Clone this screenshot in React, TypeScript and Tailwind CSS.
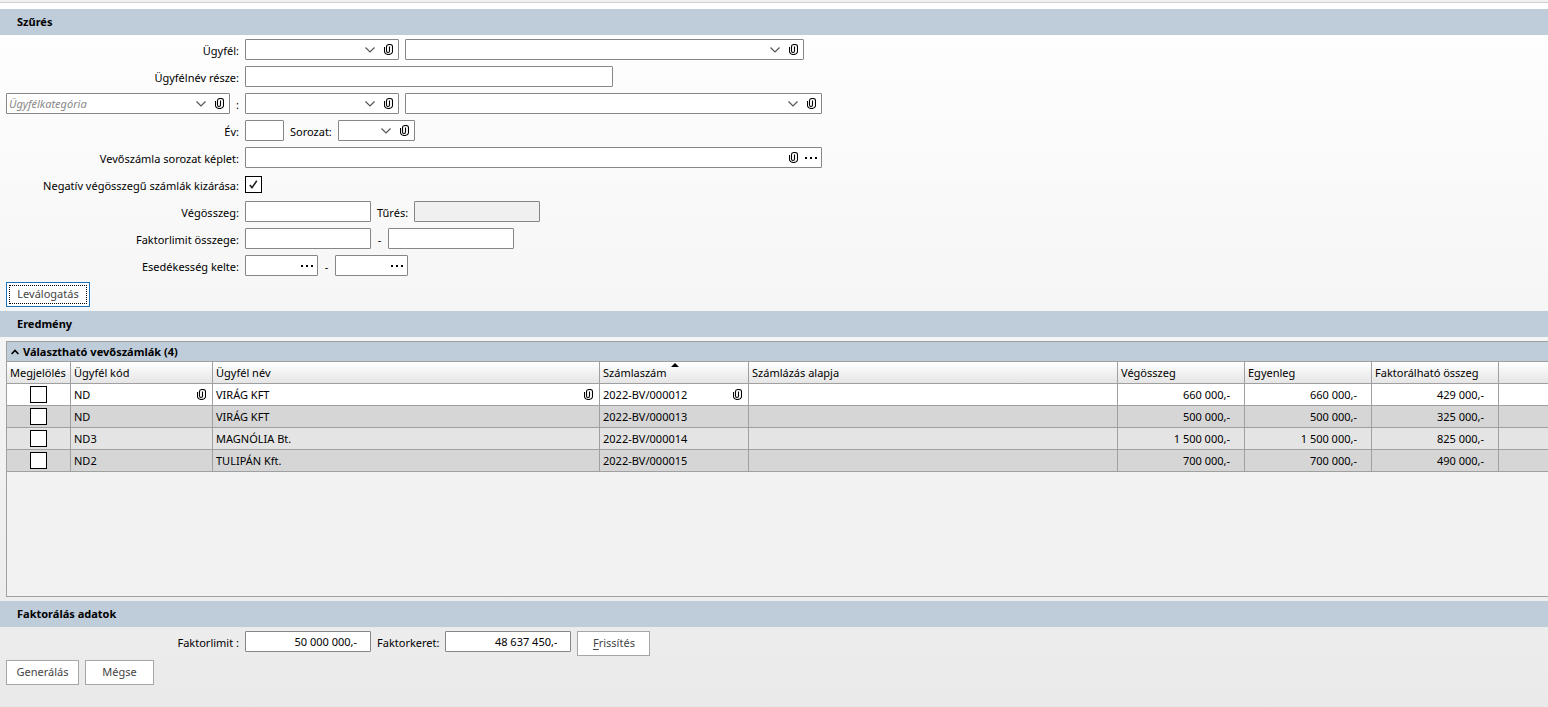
import type { ReactNode } from "react";
import clsx from "clsx";

const COLUMNS = [
  { title: "Megjelölés", width: "w-16" },
  { title: "Ügyfél kód", width: "w-[142px]" },
  { title: "Ügyfél név", width: "w-[387px]" },
  { title: "Számlaszám", width: "w-[149px]", sorted: true },
  { title: "Számlázás alapja", width: "w-[369px]" },
  { title: "Végösszeg", width: "w-[127px]" },
  { title: "Egyenleg", width: "w-[127px]" },
  { title: "Faktorálható összeg", width: "w-[127px]" },
];

const INVOICES = [
  { code: "ND", name: "VIRÁG KFT", number: "2022-BV/000012", total: "660 000,-", balance: "660 000,-", factorable: "429 000,-" },
  { code: "ND", name: "VIRÁG KFT", number: "2022-BV/000013", total: "500 000,-", balance: "500 000,-", factorable: "325 000,-" },
  { code: "ND3", name: "MAGNÓLIA Bt.", number: "2022-BV/000014", total: "1 500 000,-", balance: "1 500 000,-", factorable: "825 000,-" },
  { code: "ND2", name: "TULIPÁN Kft.", number: "2022-BV/000015", total: "700 000,-", balance: "700 000,-", factorable: "490 000,-" },
];

const FIELD = "h-[21px] rounded-[1px] border border-[#868686] bg-white";
const BUTTON = "h-[25px] border border-[#a6a6a6] bg-white pb-0.5 text-[#444]";
const CELL = "h-[22px] border-r border-b border-[#a0a0a0] p-0";

const ClipIcon = () => (
  <svg width="9" height="11" viewBox="0 0 9 11" fill="none" stroke="#000" strokeWidth="1.1" className="shrink-0">
    <path d="M.5 3v5Q1 10.5 4.5 10.5T8.5 8V2.5Q8.5.5 5.5.5T2.5 2.5V7Q2.5 8.5 4 8.5T5.5 7V2.5" />
  </svg>
);

const ChevronIcon = () => (
  <svg width="10" height="6" viewBox="0 0 10 6" fill="none" stroke="#555" strokeWidth="1.2" className="shrink-0">
    <path d="M.5.5 5 5 9.5.5" />
  </svg>
);

const DotsIcon = () => (
  <svg width="12" height="2" viewBox="0 0 12 2" className="shrink-0">
    <path d="M0 0h2v2H0zM5 0h2v2H5zM10 0h2v2h-2z" />
  </svg>
);

const CheckIcon = () => (
  <svg
    width="9"
    height="9"
    viewBox="0 0 9 9"
    fill="none"
    stroke="#222"
    strokeWidth="1.6"
    className="pointer-events-none absolute top-1 left-1 hidden peer-checked:block"
  >
    <path d="M.8 5 3 7.6 7.8.8" />
  </svg>
);

type ComboProps = { id: string; width: string; label?: string; placeholder?: string };

const Combo = ({ id, width, label, placeholder }: ComboProps) => (
  <div className={clsx(FIELD, width, "flex items-center pr-[5px]")}>
    <select
      id={id}
      aria-label={label}
      defaultValue=""
      className="h-full min-w-0 flex-1 appearance-none bg-transparent pl-0.5 text-[#888] italic outline-none"
    >
      <option value="">{placeholder}</option>
    </select>
    <ChevronIcon />
    <button type="button" aria-label="Csatolás" className="ml-[9px]">
      <ClipIcon />
    </button>
  </div>
);

const DateField = ({ id, label }: { id: string; label?: string }) => (
  <div className={clsx(FIELD, "flex w-[73px] items-center pr-1")}>
    <input id={id} aria-label={label} className="min-w-0 flex-1 bg-transparent outline-none" />
    <button type="button" aria-label="Naptár">
      <DotsIcon />
    </button>
  </div>
);

const Checkbox = ({ id, label, checked }: { id: string; label?: string; checked?: boolean }) => (
  <span className="relative block size-[17px]">
    <input
      id={id}
      type="checkbox"
      aria-label={label}
      defaultChecked={checked}
      className="peer block size-full appearance-none border border-black bg-white"
    />
    <CheckIcon />
  </span>
);

const Row = ({ label, htmlFor, children }: { label: string; htmlFor: string; children: ReactNode }) => (
  <div className="flex h-[21px] items-center gap-1.5">
    <label htmlFor={htmlFor} className="w-[233px] pt-0.5 text-right">
      {label}
    </label>
    {children}
  </div>
);

const SectionTitle = ({ children }: { children: ReactNode }) => (
  <h2 className="flex h-[26px] shrink-0 items-center bg-[#bfccda] px-[17px] font-bold">{children}</h2>
);

const FilterSection = () => (
  <section>
    <SectionTitle>Szűrés</SectionTitle>
    <form className="flex flex-col gap-1.5 px-1.5 py-1">
      <Row label="Ügyfél:" htmlFor="client">
        <Combo id="client" width="w-[154px]" />
        <Combo id="client-name" width="w-[399px]" label="Ügyfél neve" />
      </Row>
      <Row label="Ügyfélnév része:" htmlFor="name-part">
        <input id="name-part" className={clsx(FIELD, "w-[368px]")} />
      </Row>
      <div className="flex h-[21px] items-center gap-1.5">
        <div className="flex w-[233px] items-center justify-between">
          <Combo id="category" width="w-56" label="Ügyfélkategória" placeholder="Ügyfélkategória" />
          <span className="pt-0.5">:</span>
        </div>
        <Combo id="category-code" width="w-[154px]" label="Kategória kód" />
        <Combo id="category-name" width="w-[417px]" label="Kategória név" />
      </div>
      <Row label="Év:" htmlFor="year">
        <input id="year" className={clsx(FIELD, "w-[39px]")} />
        <label htmlFor="series" className="pt-0.5">
          Sorozat:
        </label>
        <Combo id="series" width="w-[77px]" />
      </Row>
      <Row label="Vevőszámla sorozat képlet:" htmlFor="formula">
        <div className={clsx(FIELD, "flex w-[577px] items-center pr-1")}>
          <input id="formula" className="min-w-0 flex-1 bg-transparent outline-none" />
          <button type="button" aria-label="Csatolás" className="mr-[7px]">
            <ClipIcon />
          </button>
          <button type="button" aria-label="Tallózás">
            <DotsIcon />
          </button>
        </div>
      </Row>
      <Row label="Negatív végösszegű számlák kizárása:" htmlFor="negative">
        <Checkbox id="negative" checked />
      </Row>
      <Row label="Végösszeg:" htmlFor="total">
        <input id="total" className={clsx(FIELD, "w-[126px]")} />
        <label htmlFor="tolerance" className="pt-0.5">
          Tűrés:
        </label>
        <input id="tolerance" disabled className="h-[21px] w-[126px] rounded-[1px] border border-[#868686] bg-[#f0f0f0]" />
      </Row>
      <Row label="Faktorlimit összege:" htmlFor="limit-from">
        <input id="limit-from" className={clsx(FIELD, "w-[126px]")} />
        <span className="w-[5px] pt-0.5 text-center">-</span>
        <input id="limit-to" aria-label="Faktorlimit felső határa" className={clsx(FIELD, "w-[126px]")} />
      </Row>
      <Row label="Esedékesség kelte:" htmlFor="due-from">
        <DateField id="due-from" />
        <span className="w-[5px] pt-0.5 text-center">-</span>
        <DateField id="due-to" label="Esedékesség vége" />
      </Row>
      <button type="button" className="flex h-[25px] w-[84px] border border-[#1873bb] bg-white p-0.5 text-[#444]">
        <span className="flex flex-1 items-center justify-center self-stretch border border-dotted border-black pb-0.5">
          Leválogatás
        </span>
      </button>
    </form>
  </section>
);

const InvoiceTable = () => (
  <table className="w-full table-fixed border-separate border-spacing-0">
    <thead>
      <tr className="bg-linear-to-b from-white to-[#e4e4e4]">
        {COLUMNS.map((col) => (
          <th key={col.title} className={clsx(CELL, col.width, "text-left font-normal whitespace-nowrap")}>
            <div className="flex h-[21px] items-center gap-1 pl-[3px]">
              {col.title}
              {col.sorted && (
                <svg width="8" height="5" viewBox="0 0 8 5" className="self-start">
                  <path d="M0 5 4 1l4 4z" />
                </svg>
              )}
            </div>
          </th>
        ))}
        <td className="border-b border-[#a0a0a0] p-0" />
      </tr>
    </thead>
    <tbody>
      {INVOICES.map((inv, i) => (
        <tr
          key={inv.number}
          className={clsx(i === 0 && "bg-white", i % 2 === 1 && "bg-[#d6d6d6]", i === 2 && "bg-[#e4e4e4]")}
        >
          <td className={CELL}>
            <div className="flex justify-center">
              <Checkbox id={`mark-${i}`} label={`Megjelölés ${inv.number}`} />
            </div>
          </td>
          {[inv.code, inv.name, inv.number].map((text, j) => (
            <td key={j} className={CELL}>
              <div className="flex items-center justify-between pr-1.5 pl-[3px]">
                {text}
                {i === 0 && (
                  <button type="button" aria-label="Csatolás">
                    <ClipIcon />
                  </button>
                )}
              </div>
            </td>
          ))}
          <td className={CELL} />
          {[inv.total, inv.balance, inv.factorable].map((amount, j) => (
            <td key={j} className={CELL}>
              <div className="pr-3.5 text-right">{amount}</div>
            </td>
          ))}
          <td className="border-b border-[#a0a0a0] p-0" />
        </tr>
      ))}
    </tbody>
  </table>
);

const ResultSection = () => (
  <section className="flex flex-1 flex-col">
    <SectionTitle>Eredmény</SectionTitle>
    <div className="my-1 ml-1.5 flex-1 border-y border-l border-[#a0a0a0] bg-[#f2f2f2]">
      <button
        type="button"
        className="flex h-5 w-full items-center gap-1 border-b border-[#a0a0a0] bg-[#bfccda] pl-1 font-bold"
      >
        <svg width="8" height="6" viewBox="0 0 8 6" fill="none" stroke="#000" strokeWidth="1.6">
          <path d="M.6 5 4 1.4 7.4 5" />
        </svg>
        Választható vevőszámlák (4)
      </button>
      <InvoiceTable />
    </div>
  </section>
);

const FactoringSection = () => (
  <section>
    <SectionTitle>Faktorálás adatok</SectionTitle>
    <div className="flex flex-col gap-1 px-1.5 pt-1 pb-[22px]">
      <div className="flex items-start gap-1.5">
        <Row label="Faktorlimit :" htmlFor="limit">
          <input id="limit" defaultValue="50 000 000,-" className={clsx(FIELD, "w-[126px] pr-[13px] text-right")} />
          <label htmlFor="frame" className="pt-0.5">
            Faktorkeret:
          </label>
          <input id="frame" defaultValue="48 637 450,-" className={clsx(FIELD, "w-[126px] pr-[13px] text-right")} />
        </Row>
        <button type="button" className={clsx(BUTTON, "w-[73px]")}>
          <u className="underline-offset-2">F</u>rissítés
        </button>
      </div>
      <div className="flex gap-1.5">
        <button type="button" className={clsx(BUTTON, "w-[73px]")}>
          Generálás
        </button>
        <button type="button" className={clsx(BUTTON, "w-[69px]")}>
          Mégse
        </button>
      </div>
    </div>
  </section>
);

export default function App() {
  return (
    <main className="flex min-h-screen flex-col overflow-x-hidden bg-linear-to-b from-white to-[#eaeaea] font-['Noto_Sans','Open_Sans',sans-serif] text-[11px] leading-4 text-black">
      <div className="mb-1.5 h-[3px] shrink-0 border-b border-[#d0d0d0] bg-[#f0f0f0]" />
      <FilterSection />
      <ResultSection />
      <FactoringSection />
    </main>
  );
}
